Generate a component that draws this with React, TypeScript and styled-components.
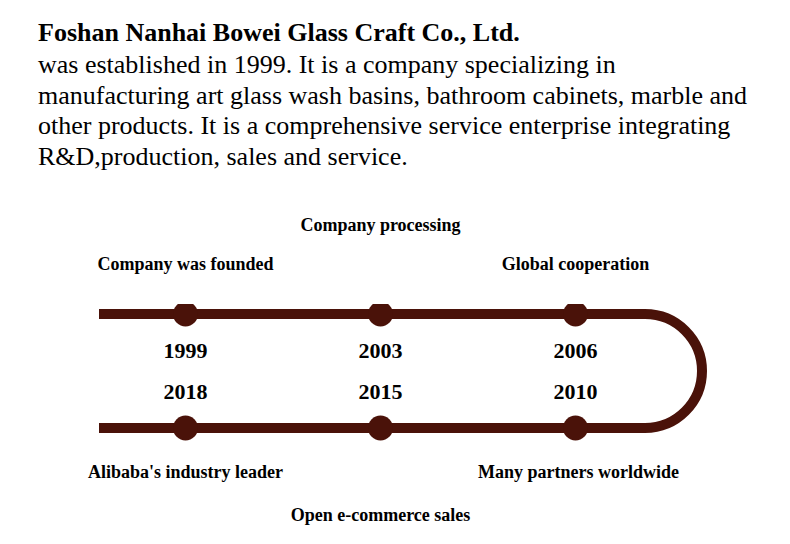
import React from 'react';
import styled, { createGlobalStyle } from 'styled-components';

const GlobalStyle = createGlobalStyle`
  html, body {
    margin: 0;
    padding: 0;
    background: #fff;
  }
  body {
    font-family: "Liberation Serif", "Times New Roman", serif;
    color: #000;
  }
`;

const Page = styled.div`
  width: 790px;
  height: 544px;
  overflow: hidden;
  padding: 18px 0 0 38px;
  box-sizing: border-box;
`;

const Intro = styled.div`
  width: 740px;
  font-size: 26px;
  line-height: 30.5px;
`;

const Title = styled.div`
  font-weight: bold;
  margin-bottom: 1.5px;
`;

const Timeline = styled.div`
  display: grid;
  grid-template-columns: 195px 195px 195px 40px;
  grid-template-rows: 39px 50px 37px 41px 36px 44px 43px 20px;
  margin: 43px 0 0 50px;
`;

const Label = styled.div<{ $col: number; $row: number }>`
  grid-column: ${p => p.$col};
  grid-row: ${p => p.$row};
  align-self: start;
  text-align: center;
  font-size: 18px;
  font-weight: bold;
  line-height: 20px;
  white-space: nowrap;
  z-index: 1;
`;

const Year = styled(Label)`
  font-size: 22px;
`;

const Track = styled.svg`
  grid-column: 1 / 5;
  grid-row: 3 / 7;
  align-self: start;
`;

const COLOR = '#4a1209';

const top = [
  { col: 1, row: 2, text: 'Company was founded', year: '1999' },
  { col: 2, row: 1, text: 'Company processing', year: '2003' },
  { col: 3, row: 2, text: 'Global cooperation', year: '2006' },
];

const bottom = [
  { col: 1, row: 7, text: "Alibaba's industry leader", year: '2018' },
  { col: 2, row: 8, text: 'Open e-commerce sales', year: '2015' },
  { col: 3, row: 7, text: 'Many partners worldwide', year: '2010' },
];

function TrackDrawing() {
  // top line y=10, bottom line y=124, columns centred at 97.5, 292.5, 487.5
  const centres = [97.5, 292.5, 487.5];
  return (
    <Track width="625" height="158" viewBox="0 0 625 158">
      <path
        d="M11 10 H557 A57 57 0 0 1 557 124 H11"
        fill="none"
        stroke={COLOR}
        strokeWidth="10"
      />
      {centres.map(x => (
        <React.Fragment key={x}>
          <circle cx={x} cy="10" r="12.5" fill={COLOR} />
          <circle cx={x} cy="124" r="12.5" fill={COLOR} />
        </React.Fragment>
      ))}
    </Track>
  );
}

export default function App() {
  return (
    <Page>
      <GlobalStyle />
      <Intro>
        <Title>Foshan Nanhai Bowei Glass Craft Co., Ltd.</Title>
        was established in 1999. It is a company specializing in
        <br />
        manufacturing art glass wash basins, bathroom cabinets, marble and
        <br />
        other products. It is a comprehensive service enterprise integrating
        <br />
        R&amp;D,production, sales and service.
      </Intro>
      <Timeline>
        <TrackDrawing />
        {top.map(item => (
          <React.Fragment key={item.year}>
            <Label $col={item.col} $row={item.row}>{item.text}</Label>
            <Year $col={item.col} $row={4}>{item.year}</Year>
          </React.Fragment>
        ))}
        {bottom.map(item => (
          <React.Fragment key={item.year}>
            <Year $col={item.col} $row={5}>{item.year}</Year>
            <Label $col={item.col} $row={item.row}>{item.text}</Label>
          </React.Fragment>
        ))}
      </Timeline>
    </Page>
  );
}
